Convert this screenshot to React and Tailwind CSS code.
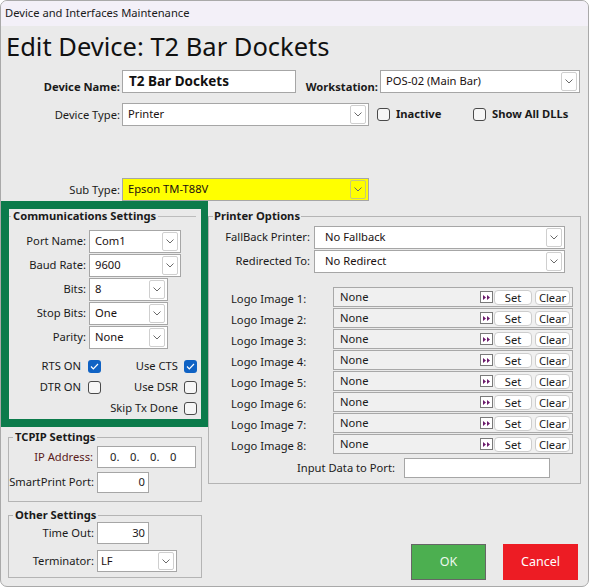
import React from "react";

function Chevron({ yellow }) {
  return (
    <div
      className={
        "ml-auto mr-[2px] w-[16px] shrink-0 self-stretch my-[1px] flex items-center justify-center rounded-[2px] border " +
        (yellow ? "bg-[#ffff00] border-[#c8c87a]" : "bg-white border-[#cfcfcf]")
      }
    >
      <svg width="8" height="5" viewBox="0 0 8 5">
        <polyline points="0.5,0.5 4,4 7.5,0.5" fill="none" stroke="#6a6a6a" strokeWidth="1" />
      </svg>
    </div>
  );
}

function Drop({ w, h = "h-[23px]", text, yellow, pl = "pl-[5px]" }) {
  return (
    <div
      className={
        "flex items-center shrink-0 border border-[#a6a6a6] " +
        w +
        " " +
        h +
        " " +
        (yellow ? "bg-[#ffff00]" : "bg-white")
      }
    >
      <span className={"text-[11.2px] text-[#1a1010] whitespace-nowrap " + pl}>{text}</span>
      <Chevron yellow={yellow} />
    </div>
  );
}

function Check({ checked }) {
  if (checked) {
    return (
      <div className="w-[13px] h-[13px] rounded-[3px] bg-[#0f62c4] flex items-center justify-center shrink-0">
        <svg width="9" height="7" viewBox="0 0 9 7">
          <polyline points="1,3.5 3.3,5.8 8,1" fill="none" stroke="white" strokeWidth="1.2" />
        </svg>
      </div>
    );
  }
  return <div className="w-[13px] h-[13px] rounded-[3px] border border-[#4a4a4a] bg-[#f6f6f6] shrink-0" />;
}

function LogoRow({ n }) {
  return (
    <div className="flex items-center h-[20px]">
      <div className="w-[124px] shrink-0 pl-[22px] text-[11.2px] text-[#1a1a1a] whitespace-nowrap leading-[20px] pt-[3px]">
        Logo Image {n}:
      </div>
      <div className="flex items-center shrink-0 w-[240px] h-[20px] border border-[#a8a8a8] bg-[#f0f0f0]">
        <span className="pl-[6px] text-[11.2px] text-[#1a1a1a]">None</span>
        <div className="ml-auto w-[13px] h-[12px] shrink-0 border border-[#7a7a7a] bg-white flex items-center justify-center">
          <svg width="7" height="5" viewBox="0 0 7 5">
            <polygon points="0,0 3,2.5 0,5" fill="#6b1b6b" />
            <polygon points="4,0 7,2.5 4,5" fill="#6b1b6b" />
          </svg>
        </div>
        <div className="ml-[1px] w-[38px] h-[15px] shrink-0 rounded-[4px] border border-[#cdcdcd] bg-white flex items-center justify-center text-[11.2px] leading-[13px] text-[#1a1a1a]">
          Set
        </div>
        <div className="ml-[3px] mr-[2px] w-[35px] h-[15px] shrink-0 rounded-[4px] border border-[#cdcdcd] bg-white flex items-center justify-center text-[11.2px] leading-[13px] text-[#1a1a1a]">
          Clear
        </div>
      </div>
    </div>
  );
}

function Field({ label, lw, children, className = "", labelColor = "text-[#1a1a1a]" }) {
  return (
    <div className={"flex items-center " + className}>
      <div className={"shrink-0 text-right text-[11.2px] whitespace-nowrap " + lw + " " + labelColor}>{label}</div>
      {children}
    </div>
  );
}

export default function App() {
  return (
    <div className="w-[590px] h-[588px] bg-white font-['Segoe_UI','Noto_Sans',sans-serif] text-[#1a1a1a]">
      <div className="w-[589px] h-[587px] border border-[#a9a9a9] rounded-[7px] overflow-hidden flex flex-col bg-[#eaeaea]">
        <div className="h-[25px] shrink-0 bg-[#f3f0f8] flex items-center pl-[4px] text-[11.2px] text-[#1a1a1a]">
          Device and Interfaces Maintenance
        </div>

        <div className="flex flex-col">
          <div className="mt-[4px] ml-[5px] h-[32px] text-[25.5px] leading-[32px] text-[#111] whitespace-nowrap">
            Edit Device: T2 Bar Dockets
          </div>

          {/* Row 1 */}
          <div className="mt-[8px] flex items-start h-[23px]">
            <div className="w-[119px] text-right text-[11.2px] font-bold pt-[9px] leading-[16px]">Device Name:</div>
            <div className="ml-[2px] w-[174px] h-[23px] border border-[#a6a6a6] bg-white flex items-center pl-[6px] text-[13.5px] font-bold text-[#111]">
              T2 Bar Dockets
            </div>
            <div className="w-[82px] text-right text-[11.2px] font-bold pt-[9px] leading-[16px]">Workstation:</div>
            <div className="ml-[2px]">
              <Drop w="w-[200px]" text="POS-02 (Main Bar)" />
            </div>
          </div>

          {/* Row 2 */}
          <div className="mt-[10px] flex items-center h-[23px]">
            <div className="w-[119px] text-right text-[11.2px] pt-[2px]">Device Type:</div>
            <div className="ml-[2px]">
              <Drop w="w-[247px]" text="Printer" />
            </div>
            <div className="ml-[8px] w-[96px] flex items-center gap-[6px]">
              <Check />
              <span className="text-[11.2px] font-bold">Inactive</span>
            </div>
            <div className="flex items-center gap-[6px]">
              <Check />
              <span className="text-[11.2px] font-bold">Show All DLLs</span>
            </div>
          </div>

          {/* Sub type */}
          <div className="mt-[52px] flex items-center h-[23px]">
            <div className="w-[119px] text-right text-[11.2px] pt-[1px]">Sub Type:</div>
            <div className="ml-[2px]">
              <Drop w="w-[247px]" text="Epson TM-T88V" yellow />
            </div>
          </div>

          {/* Main area */}
          <div className="flex">
            {/* Left column */}
            <div className="w-[207px] flex flex-col">
              <div className="w-[207px] h-[226px] bg-[#0b7b4b] pt-[8px] pl-[8px] pr-[7px] pb-[8px]">
                <div className="w-full h-full bg-[#eaeaea]">
                  <fieldset className="border-0 border-t border-[#bdbdbd] mr-[5px] pl-[2px]">
                    <legend className="px-[2px] text-[11.2px] font-bold leading-[14px]">Communications Settings</legend>
                  </fieldset>
                  <div className="mt-[7px] flex flex-col gap-[1px]">
                    <Field label="Port Name:" lw="w-[77px] mr-[3px]">
                      <Drop w="w-[92px]" text="Com1" />
                    </Field>
                    <Field label="Baud Rate:" lw="w-[77px] mr-[3px]">
                      <Drop w="w-[92px]" text="9600" />
                    </Field>
                    <Field label="Bits:" lw="w-[77px] mr-[3px]">
                      <Drop w="w-[79px]" text="8" />
                    </Field>
                    <Field label="Stop Bits:" lw="w-[77px] mr-[3px]">
                      <Drop w="w-[79px]" text="One" />
                    </Field>
                    <Field label="Parity:" lw="w-[77px] mr-[3px]">
                      <Drop w="w-[79px]" text="None" />
                    </Field>
                  </div>
                  <div className="mt-[7px] flex flex-col">
                    <div className="flex items-center h-[21px]">
                      <div className="w-[92px] flex justify-end items-center gap-[7px]">
                        <span className="text-[11.2px]">RTS ON</span>
                        <Check checked />
                      </div>
                      <div className="w-[96px] flex justify-end items-center gap-[6px]">
                        <span className="text-[11.2px]">Use CTS</span>
                        <Check checked />
                      </div>
                    </div>
                    <div className="flex items-center h-[21px]">
                      <div className="w-[92px] flex justify-end items-center gap-[7px]">
                        <span className="text-[11.2px]">DTR ON</span>
                        <Check />
                      </div>
                      <div className="w-[96px] flex justify-end items-center gap-[6px]">
                        <span className="text-[11.2px]">Use DSR</span>
                        <Check />
                      </div>
                    </div>
                    <div className="flex items-center h-[21px]">
                      <div className="w-[92px]" />
                      <div className="w-[96px] flex justify-end items-center gap-[6px]">
                        <span className="text-[11.2px] whitespace-nowrap">Skip Tx Done</span>
                        <Check />
                      </div>
                    </div>
                  </div>
                </div>
              </div>

              <fieldset className="mt-[2px] ml-[7px] w-[194px] h-[73px] border border-[#b4b4b4] pl-[4px]">
                <legend className="px-[2px] text-[11.2px] font-bold leading-[16px]">TCPIP Settings</legend>
                <div className="-ml-[4px] mt-[1px] flex flex-col">
                  <Field label="IP Address:" lw="w-[84px] mr-[4px]" labelColor="text-[#5a2020]">
                    <div className="w-[99px] h-[22px] bg-white border border-[#a6a6a6] flex items-center pl-[12px] text-[11.2px]">
                      <span className="w-[20px]">0.</span>
                      <span className="w-[20px]">0.</span>
                      <span className="w-[20px]">0.</span>
                      <span className="w-[20px]">0</span>
                    </div>
                  </Field>
                  <Field label="SmartPrint Port:" lw="w-[85px] mr-[3px]" className="mt-[4px]">
                    <div className="w-[52px] h-[21px] bg-white border border-[#a6a6a6] flex items-center justify-end pr-[3px] text-[11.2px]">
                      0
                    </div>
                  </Field>
                </div>
              </fieldset>

              <fieldset className="mt-[5px] ml-[7px] w-[194px] h-[71px] border border-[#b4b4b4] pl-[4px]">
                <legend className="px-[2px] text-[11.2px] font-bold leading-[16px]">Other Settings</legend>
                <div className="-ml-[4px] -mt-[1px] flex flex-col">
                  <Field label="Time Out:" lw="w-[85px] mr-[3px]">
                    <div className="w-[52px] h-[22px] bg-white border border-[#a6a6a6] flex items-center justify-end pr-[3px] text-[11.2px]">
                      30
                    </div>
                  </Field>
                  <Field label="Terminator:" lw="w-[85px] mr-[3px]" className="mt-[6px]">
                    <Drop w="w-[80px]" h="h-[22px]" text="LF" pl="pl-[3px]" />
                  </Field>
                </div>
              </fieldset>
            </div>

            {/* Right column */}
            <div className="w-[373px] flex flex-col">
              <fieldset className="mt-[7px] w-[373px] h-[276px] border border-[#b4b4b4] pl-[4px]">
                <legend className="px-[1px] text-[11.2px] font-bold leading-[16px]">Printer Options</legend>
                <div className="-ml-[4px] mt-[2px] flex flex-col">
                  <Field label="FallBack Printer:" lw="w-[101px] mr-[4px]">
                    <Drop w="w-[251px]" text="No Fallback" pl="pl-[10px]" />
                  </Field>
                  <Field label="Redirected To:" lw="w-[101px] mr-[4px]" className="mt-[1px]">
                    <Drop w="w-[251px]" text="No Redirect" pl="pl-[10px]" />
                  </Field>
                  <div className="mt-[14px] flex flex-col gap-[1px]">
                    {[1, 2, 3, 4, 5, 6, 7, 8].map((n) => (
                      <LogoRow key={n} n={n} />
                    ))}
                  </div>
                  <Field label="Input Data to Port:" lw="w-[186px] mr-[9px]" className="mt-[4px]">
                    <div className="w-[146px] h-[20px] bg-white border border-[#a6a6a6]" />
                  </Field>
                </div>
              </fieldset>
              <div className="mt-[60px] flex justify-end gap-[17px] pr-[3px]">
                <div className="w-[75px] h-[36px] bg-[#4caf50] border border-[#666] flex items-center justify-center text-[12.5px] text-[#eef8ee]">
                  OK
                </div>
                <div className="w-[75px] h-[36px] bg-[#ed1c24] flex items-center justify-center text-[12.5px] text-white">
                  Cancel
                </div>
              </div>
            </div>
          </div>
        </div>
      </div>
    </div>
  );
}
